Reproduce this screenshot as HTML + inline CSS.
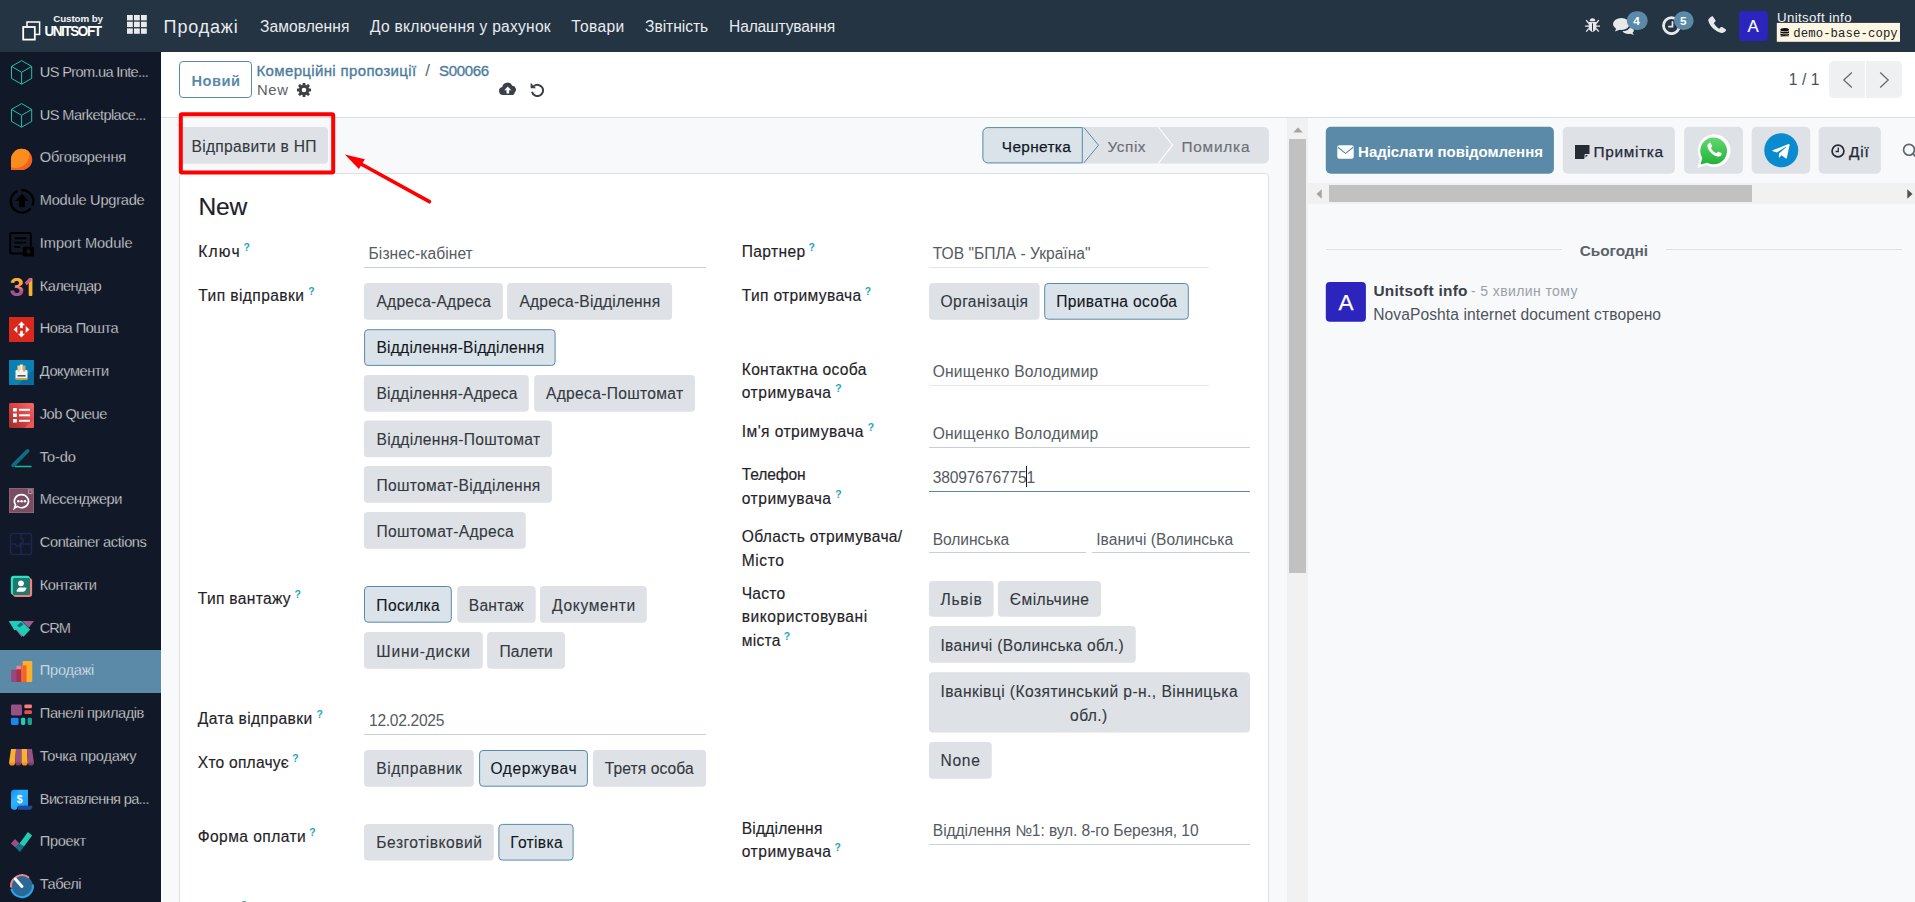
<!DOCTYPE html>
<html lang="uk"><head><meta charset="utf-8"><title>Odoo - S00066</title>
<style>html,body{margin:0;padding:0}html{width:1915px;height:902px;overflow:hidden}body{width:1915px;height:902px;overflow:hidden;position:relative;background:#f8f9fa;font-family:"Liberation Sans",sans-serif}div,span,svg{box-sizing:border-box}</style></head>
<body>
<div style="position:absolute;left:0px;top:0px;width:1915px;height:52px;background:#243442;"></div>
<svg style="position:absolute;left:21.5px;top:21px;" width="19" height="20" viewBox="0 0 19 20"><rect x="5" y="1" width="12.6" height="12.4" fill="none" stroke="#fff" stroke-width="1.5"/><rect x="1.2" y="6" width="11.6" height="12.6" fill="#243442" stroke="#fff" stroke-width="1.8"/></svg>
<span style="position:absolute;left:53.21px;top:14px;font-family:'Liberation Sans', sans-serif;font-size:9.8px;line-height:1;color:#f4f6f7;font-weight:700;white-space:pre;letter-spacing:-0.094px;">Custom by</span>
<span style="position:absolute;left:44.39px;top:25px;font-family:'Liberation Sans', sans-serif;font-size:13.5px;line-height:1;color:#fff;font-weight:700;white-space:pre;letter-spacing:-1.410px;transform:scaleY(1.05);transform-origin:0 100%;">UNITSOFT</span>
<svg style="position:absolute;left:127px;top:15px;" width="21" height="20" viewBox="0 0 21 20"><rect x="0" y="0.0" width="5.8" height="5.4" fill="#e8eaed"/><rect x="7" y="0.0" width="5.8" height="5.4" fill="#e8eaed"/><rect x="14" y="0.0" width="5.8" height="5.4" fill="#e8eaed"/><rect x="0" y="6.7" width="5.8" height="5.4" fill="#e8eaed"/><rect x="7" y="6.7" width="5.8" height="5.4" fill="#e8eaed"/><rect x="14" y="6.7" width="5.8" height="5.4" fill="#e8eaed"/><rect x="0" y="13.4" width="5.8" height="5.4" fill="#e8eaed"/><rect x="7" y="13.4" width="5.8" height="5.4" fill="#e8eaed"/><rect x="14" y="13.4" width="5.8" height="5.4" fill="#e8eaed"/></svg>
<span style="position:absolute;left:163.62px;top:18px;font-family:'Liberation Sans', sans-serif;font-size:18px;line-height:1;color:#e8ebee;font-weight:400;white-space:pre;letter-spacing:0.834px;">Продажі</span>
<span style="position:absolute;left:260.06px;top:19px;font-family:'Liberation Sans', sans-serif;font-size:15.6px;line-height:1;color:#e8ebee;font-weight:400;white-space:pre;letter-spacing:0.051px;">Замовлення</span>
<span style="position:absolute;left:370.06px;top:19px;font-family:'Liberation Sans', sans-serif;font-size:15.6px;line-height:1;color:#e8ebee;font-weight:400;white-space:pre;letter-spacing:0.246px;">До включення у рахунок</span>
<span style="position:absolute;left:571.36px;top:19px;font-family:'Liberation Sans', sans-serif;font-size:15.6px;line-height:1;color:#e8ebee;font-weight:400;white-space:pre;letter-spacing:0.353px;">Товари</span>
<span style="position:absolute;left:645.06px;top:19px;font-family:'Liberation Sans', sans-serif;font-size:15.6px;line-height:1;color:#e8ebee;font-weight:400;white-space:pre;letter-spacing:-0.031px;">Звітність</span>
<span style="position:absolute;left:729.06px;top:19px;font-family:'Liberation Sans', sans-serif;font-size:15.6px;line-height:1;color:#e8ebee;font-weight:400;white-space:pre;letter-spacing:-0.159px;">Налаштування</span>
<svg style="position:absolute;left:1585px;top:17px;" width="15" height="15.5" viewBox="0 0 15 15.5"><g fill="#e6e8ea"><path d="M4.700 4.300A2.800 3.100 0 0 1 10.300 4.300z"/><path d="M3.700 5.100H11.300V10.500C11.300 13 9.300 14.600 7.500 14.900 5.700 14.600 3.700 13 3.700 10.500z"/></g><g stroke="#e6e8ea" stroke-width="1.300" fill="none"><path d="M3.900 6.500L1.200 3.200M11.100 6.500L13.800 3.200M0 9.200H4M11 9.200H15M3.900 11.500L1.200 14.600M11.100 11.500L13.800 14.600"/></g><rect x="7" y="6.300" width="1" height="8" fill="#243442"/></svg>
<svg style="position:absolute;left:1613px;top:18px;" width="22" height="17" viewBox="0 0 22 17"><g fill="#e6e8ea"><ellipse cx="8.300" cy="6" rx="8.300" ry="6"/><path d="M3.500 9.500L2 13.600 8.500 11z"/><path d="M9.500 13.200c3.500 0 7-1.600 8-4.700 1.800.6 3.300 2 3.300 3.700 0 1-.5 1.900-1.300 2.600l1.300 2.100-3.600-1.100c-3 .6-6.200-.3-7.700-2.600z"/></g></svg>
<svg style="position:absolute;left:1625px;top:10px" width="24" height="22"><rect x="1.80" y="1.30" width="20.90" height="18.80" rx="9.4" fill="#5b8aa9"/></svg>
<span style="position:absolute;left:1633.19px;top:16px;font-family:'Liberation Sans', sans-serif;font-size:11.8px;line-height:1;color:#fff;font-weight:700;white-space:pre;">4</span>
<svg style="position:absolute;left:1661.8px;top:15.8px;" width="19.2" height="19.4" viewBox="0 0 19.2 19.4"><circle cx="9.500" cy="9.700" r="8" fill="none" stroke="#e6e8ea" stroke-width="2.800"/><path d="M10.500 5.300v5.300h-4.300" fill="none" stroke="#e6e8ea" stroke-width="1.700"/></svg>
<svg style="position:absolute;left:1673px;top:10px" width="22" height="22"><rect x="1.00" y="1.30" width="19.60" height="18.80" rx="9.4" fill="#5b8aa9"/></svg>
<span style="position:absolute;left:1679.89px;top:16px;font-family:'Liberation Sans', sans-serif;font-size:11.8px;line-height:1;color:#fff;font-weight:700;white-space:pre;">5</span>
<svg style="position:absolute;left:1707.8px;top:16px;" width="18.4" height="17.4" viewBox="0 0 18.4 17.4"><path d="M3.6 0.6c.5-.4 1.2-.3 1.5.2l2.3 3.4c.3.5.2 1.100-.2 1.500l-1.400 1.300c1.200 2.500 3.100 4.500 5.600 5.700l1.300-1.400c.4-.400 1-.500 1.500-.200l3.400 2.200c.5.300.6 1 .2 1.500-1.100 1.500-2.700 2.400-4.300 2.100C7.300 15.800 1.300 9.800.3 4.600 0 3 1.900 1.600 3.600.6z" fill="#e6e8ea"/></svg>
<svg style="position:absolute;left:1738px;top:10px" width="31" height="32"><rect x="1.00" y="1.10" width="28.90" height="29.80" rx="4" fill="#2c25bd"/></svg>
<span style="position:absolute;left:1747.49px;top:19px;font-family:'Liberation Sans', sans-serif;font-size:16.8px;line-height:1;color:#fff;font-weight:400;white-space:pre;-webkit-text-stroke:0.15px #fff;">A</span>
<span style="position:absolute;left:1777.00px;top:11px;font-family:'Liberation Sans', sans-serif;font-size:13.3px;line-height:1;color:#f1f3f5;font-weight:400;white-space:pre;letter-spacing:0.360px;">Unitsoft info</span>
<svg style="position:absolute;left:1775px;top:21px" width="126" height="22"><rect x="1.80" y="1.90" width="123.20" height="18.90" rx="0" fill="#fcf6e3"/></svg>
<svg style="position:absolute;left:1779.8px;top:27.9px;" width="9.5" height="9.5" viewBox="0 0 9.5 9.5"><g fill="#111"><ellipse cx="4.75" cy="1.8" rx="4.4" ry="1.7"/><path d="M.35 3.2c.8 1 8 1 8.800 0v1.600c-.8 1-8 1-8.800 0z"/><path d="M.35 5.600c.8 1 8 1 8.800 0v1.600c-.8 1-8 1-8.800 0z"/><path d="M.35 8c.8 1 8 1 8.800 0v0c0 2-8.800 2-8.800 0z"/></g></svg>
<span style="position:absolute;left:1793.26px;top:28px;font-family:'Liberation Mono', monospace;font-size:12.3px;line-height:1;color:#222;font-weight:400;white-space:pre;letter-spacing:0.090px;">demo-base-copy</span>
<div style="position:absolute;left:0px;top:52px;width:161px;height:850px;background:#111827;"></div>
<div style="position:absolute;left:0px;top:650px;width:161px;height:43px;background:#5b8aa9;"></div>
<svg style="position:absolute;left:10.5px;top:60.1px;" width="23" height="26" viewBox="0 0 23 26"><g fill="none" stroke="#20c9b3" stroke-width=".950" stroke-linejoin="round"><path d="M10.600 .600 L20.700 6.400 V18.400 L10.600 24.200 L.500 18.400 V6.400z"/><path d="M.500 6.400 L10.600 12.300 L20.700 6.400 M10.600 12.300 V24.200"/></g></svg>
<span style="position:absolute;left:39.82px;top:65px;font-family:'Liberation Sans', sans-serif;font-size:14.6px;line-height:1;color:#eceef2;font-weight:400;white-space:pre;letter-spacing:-0.644px;-webkit-text-stroke:0.35px #111827;">US Prom.ua Inte...</span>
<svg style="position:absolute;left:10.5px;top:102.89999999999999px;" width="23" height="26" viewBox="0 0 23 26"><g fill="none" stroke="#20c9b3" stroke-width=".950" stroke-linejoin="round"><path d="M10.600 .600 L20.700 6.400 V18.400 L10.600 24.200 L.500 18.400 V6.400z"/><path d="M.500 6.400 L10.600 12.300 L20.700 6.400 M10.600 12.300 V24.200"/></g></svg>
<span style="position:absolute;left:39.82px;top:108px;font-family:'Liberation Sans', sans-serif;font-size:14.6px;line-height:1;color:#eceef2;font-weight:400;white-space:pre;letter-spacing:-0.590px;-webkit-text-stroke:0.35px #111827;">US Marketplace...</span>
<svg style="position:absolute;left:10px;top:146.6px;" width="24" height="24" viewBox="0 0 24 24"><defs><clipPath id="dc"><path d="M11.600 1.800a10.600 10.600 0 0 1 0 21.300H1V12.400A10.600 10.600 0 0 1 11.600 1.800z"/></clipPath></defs><path d="M11.600 1.800a10.600 10.600 0 0 1 0 21.300H1V12.400A10.600 10.600 0 0 1 11.600 1.800z" fill="#f4631e"/><circle cx="5.500" cy="7" r="14" fill="#fb8c1e" clip-path="url(#dc)"/></svg>
<span style="position:absolute;left:39.82px;top:150px;font-family:'Liberation Sans', sans-serif;font-size:14.6px;line-height:1;color:#eceef2;font-weight:400;white-space:pre;letter-spacing:-0.250px;-webkit-text-stroke:0.35px #111827;">Обговорення</span>
<svg style="position:absolute;left:8.5px;top:188.39999999999998px;" width="26" height="26" viewBox="0 0 26 26"><circle cx="13" cy="13.300" r="11.300" fill="none" stroke="#000" stroke-width="2.300" stroke-dasharray="40.400 4 22.600 4" transform="rotate(40 13 13.300)"/><path d="M13 5.800l6.900 7.200h-3.900v6.200h-6v-6.200H6.100z" fill="#000"/></svg>
<span style="position:absolute;left:39.82px;top:193px;font-family:'Liberation Sans', sans-serif;font-size:14.6px;line-height:1;color:#eceef2;font-weight:400;white-space:pre;letter-spacing:-0.232px;-webkit-text-stroke:0.35px #111827;">Module Upgrade</span>
<svg style="position:absolute;left:9px;top:231.2px;" width="27" height="27" viewBox="0 0 27 27"><g fill="none" stroke="#000" stroke-width="1.900"><path d="M14 22.500H2.700a1.500 1.500 0 0 1-1.500-1.500V3.500A1.500 1.500 0 0 1 2.700 2H20.300a1.500 1.500 0 0 1 1.500 1.500V15.500"/><path d="M5.500 7.200h12M5.500 11.600h11.500M5.500 16h5.500"/></g><rect x="13.800" y="15.800" width="11.300" height="9.800" rx="1.500" fill="#000"/><path d="M19.400 23.300l-3-3.200h1.900v-2.300h2.200v2.300h1.900z" fill="#111827"/></svg>
<span style="position:absolute;left:39.82px;top:236px;font-family:'Liberation Sans', sans-serif;font-size:14.6px;line-height:1;color:#eceef2;font-weight:400;white-space:pre;letter-spacing:-0.048px;-webkit-text-stroke:0.35px #111827;">Import Module</span>
<svg style="position:absolute;left:10px;top:275.0px;" width="24" height="24" viewBox="0 0 24 24"><defs><linearGradient id="cg" x1="0" y1="0" x2="0" y2="1"><stop offset="0" stop-color="#fbb130"/><stop offset=".38" stop-color="#fbb130"/><stop offset=".52" stop-color="#f4788a"/><stop offset=".66" stop-color="#a4568c"/><stop offset="1" stop-color="#a4568c"/></linearGradient></defs><text x="-.300" y="21.100" font-family="Liberation Sans" font-weight="700" font-size="25.400" fill="url(#cg)" textLength="14.200" lengthAdjust="spacingAndGlyphs">3</text><rect x="18.700" y="3" width="3.700" height="18.100" rx=".800" fill="#fbb130"/><path d="M14.800 7.600L19.300 3h2.200v2.400L16.800 10.300z" fill="#c95f8e"/></svg>
<span style="position:absolute;left:39.82px;top:279px;font-family:'Liberation Sans', sans-serif;font-size:14.6px;line-height:1;color:#eceef2;font-weight:400;white-space:pre;letter-spacing:-0.614px;-webkit-text-stroke:0.35px #111827;">Календар</span>
<svg style="position:absolute;left:9px;top:317px;" width="25" height="25" viewBox="0 0 25 25"><rect width="25" height="25" fill="#da291c"/><g fill="#fff" transform="translate(1.500 1.500) scale(.88)"><path d="M12.500 3.500l4 4.200h-8z"/><path d="M12.500 21.500l4-4.200h-8z"/><path d="M3.500 12.500l4.200-4v8z"/><path d="M21.500 12.500l-4.200-4v8z"/><rect x="11" y="7" width="3" height="4"/><rect x="11" y="14" width="3" height="4"/></g></svg>
<span style="position:absolute;left:39.82px;top:321px;font-family:'Liberation Sans', sans-serif;font-size:14.6px;line-height:1;color:#eceef2;font-weight:400;white-space:pre;letter-spacing:-0.502px;-webkit-text-stroke:0.35px #111827;">Нова Пошта</span>
<svg style="position:absolute;left:9px;top:360px;" width="25" height="25" viewBox="0 0 25 25"><rect width="25" height="25" fill="#0d80b3"/><path d="M9 25L25 9v16z" fill="#0a6c9c"/><g><rect x="6.500" y="10" width="12" height="9" rx="1" fill="#eef2f5"/><rect x="8.500" y="5.500" width="2.500" height="6" fill="#f6d87a"/><rect x="11.200" y="4.500" width="2.500" height="7" fill="#fff"/><rect x="13.900" y="5.500" width="2.500" height="6" fill="#f29c50"/><rect x="8.500" y="15" width="8" height="1.600" fill="#555"/><rect x="6.500" y="18" width="12" height="2" fill="#c9a24a"/></g></svg>
<span style="position:absolute;left:39.82px;top:364px;font-family:'Liberation Sans', sans-serif;font-size:14.6px;line-height:1;color:#eceef2;font-weight:400;white-space:pre;letter-spacing:-0.438px;-webkit-text-stroke:0.35px #111827;">Документи</span>
<svg style="position:absolute;left:9px;top:403px;" width="25" height="25" viewBox="0 0 25 25"><defs><linearGradient id="jq" x1="1" y1="0" x2="0" y2="1"><stop offset="0" stop-color="#f76a68"/><stop offset=".45" stop-color="#d94545"/><stop offset="1" stop-color="#a02c2c"/></linearGradient></defs><rect width="25" height="25" rx="1.500" fill="url(#jq)"/><path d="M25 15.500V23.500a1.500 1.500 0 0 1-1.500 1.500H15.500z" fill="#ec5554"/><g fill="#fff"><rect x="4" y="5" width="3.800" height="3.500"/><rect x="10" y="5.800" width="11" height="2"/><rect x="4" y="10.500" width="3.800" height="3.500"/><rect x="10" y="11.300" width="11" height="2"/><rect x="4" y="16" width="3.800" height="3.500"/><rect x="10" y="16.800" width="11" height="2"/></g></svg>
<span style="position:absolute;left:39.82px;top:407px;font-family:'Liberation Sans', sans-serif;font-size:14.6px;line-height:1;color:#eceef2;font-weight:400;white-space:pre;letter-spacing:-0.495px;-webkit-text-stroke:0.35px #111827;">Job Queue</span>
<svg style="position:absolute;left:10px;top:446.2px;" width="24" height="24" viewBox="0 0 24 24"><path d="M3.200 19.300L17.600 4.900" stroke="#0f6c82" stroke-width="3.800" stroke-linecap="round" fill="none"/><path d="M5 20.500H21.500" stroke="#17b39d" stroke-width="1.600" fill="none"/></svg>
<span style="position:absolute;left:39.82px;top:450px;font-family:'Liberation Sans', sans-serif;font-size:14.6px;line-height:1;color:#eceef2;font-weight:400;white-space:pre;letter-spacing:-0.093px;-webkit-text-stroke:0.35px #111827;">To-do</span>
<svg style="position:absolute;left:9px;top:488px;" width="25" height="25" viewBox="0 0 25 25"><rect width="25" height="25" fill="#7b4d62"/><rect x=".400" y=".400" width="24.200" height="24.200" fill="none" stroke="#94697c" stroke-width=".800"/><g transform="translate(0 1.200)"><path d="M12.500 5.500a7 6.500 0 1 1-4.200 11.700L5.500 19l1-3.500A7 6.500 0 0 1 12.500 5.500z" fill="none" stroke="#fff" stroke-width="1.700"/><g fill="#fff"><circle cx="9.300" cy="12" r="1.300"/><circle cx="12.600" cy="12" r="1.300"/><circle cx="15.900" cy="12" r="1.300"/></g></g><rect x="19.500" y="2" width="3.500" height="3.500" fill="none" stroke="#c8a9b6" stroke-width=".800"/></svg>
<span style="position:absolute;left:39.82px;top:492px;font-family:'Liberation Sans', sans-serif;font-size:14.6px;line-height:1;color:#eceef2;font-weight:400;white-space:pre;letter-spacing:-0.443px;-webkit-text-stroke:0.35px #111827;">Месенджери</span>
<svg style="position:absolute;left:9.4px;top:531.5999999999999px;" width="24" height="24" viewBox="0 0 24 24"><g fill="none" stroke="#1d2650" stroke-width="1.500"><rect x="1.500" y="1.500" width="21" height="21" rx="2.500"/><path d="M12 1.500v5a2 2 0 1 1 0 4.500v11.500M1.500 12h5a2 2 0 1 0 4.500 0h11.500"/></g></svg>
<span style="position:absolute;left:39.82px;top:535px;font-family:'Liberation Sans', sans-serif;font-size:14.6px;line-height:1;color:#eceef2;font-weight:400;white-space:pre;letter-spacing:-0.407px;-webkit-text-stroke:0.35px #111827;">Container actions</span>
<svg style="position:absolute;left:10px;top:574.5999999999999px;" width="24" height="24" viewBox="0 0 24 24"><rect x="2.900" y="2.900" width="19.200" height="19.200" rx="3" fill="#f87e7c"/><rect x=".800" y=".800" width="19.200" height="19.200" rx="3" fill="#2fe0c8"/><rect x="3" y="3" width="17" height="17" rx="1.500" fill="#1e7a6f"/><circle cx="11" cy="8.300" r="2.900" fill="#fff"/><path d="M7.800 13.800c.5-.900 1.300-1.300 2.300-1.300h5.300c1 0 1.300.800.800 1.600l-.900 1.500c-.500.800-1.300 1.200-2.300 1.200H7.600c-1 0-1.300-.700-.800-1.500z" fill="#fff"/></svg>
<span style="position:absolute;left:39.82px;top:578px;font-family:'Liberation Sans', sans-serif;font-size:14.6px;line-height:1;color:#eceef2;font-weight:400;white-space:pre;letter-spacing:-0.506px;-webkit-text-stroke:0.35px #111827;">Контакти</span>
<svg style="position:absolute;left:8px;top:620.0px;" width="28" height="22" viewBox="0 0 28 22"><path d="M1 1h25L13.500 17z" fill="#9b5a8e"/><path d="M.800 1H13.500L22.300 9.500 15.500 16.800 8.300 9.800 6.300 10.200z" fill="#1fcdb5"/><path d="M13.300 1h1l8.300 8.200-.500.500z" fill="#111827" opacity=".55"/><path d="M9 5.500L13 2.200 15.500 4.300 11.500 7.500z" fill="#0f6c82"/></svg>
<span style="position:absolute;left:39.82px;top:621px;font-family:'Liberation Sans', sans-serif;font-size:14.6px;line-height:1;color:#eceef2;font-weight:400;white-space:pre;letter-spacing:-1.033px;-webkit-text-stroke:0.35px #111827;">CRM</span>
<svg style="position:absolute;left:10px;top:660.1999999999999px;" width="24" height="24" viewBox="0 0 24 24"><g transform="translate(.200 .100) scale(.960)"><rect x="1" y="10" width="9" height="12.800" rx="1" fill="#98487f"/><rect x="6.500" y="6" width="5" height="5" rx="1" fill="#f87e8a"/><rect x="6.500" y="9.500" width="5" height="13.300" rx=".500" fill="#a5304f"/><rect x="11.500" y="5.500" width="6" height="17.300" rx="1" fill="#f4622a"/><rect x="13" y="1" width="10" height="21.800" rx="1.200" fill="#fbb130"/><rect x="13" y="5.500" width="4" height="17.300" fill="#f4622a"/></g></svg>
<span style="position:absolute;left:39.82px;top:663px;font-family:'Liberation Sans', sans-serif;font-size:14.6px;line-height:1;color:#f0f4f8;font-weight:400;white-space:pre;letter-spacing:-0.271px;-webkit-text-stroke:0.35px #5b8aa9;">Продажі</span>
<svg style="position:absolute;left:10px;top:703.2px;" width="24" height="24" viewBox="0 0 24 24"><g transform="scale(.955)"><rect x="1" y="1.500" width="11.500" height="11.500" rx="1.500" fill="#985184"/><rect x="15" y="1.500" width="8" height="4" rx="1.300" fill="#f87e7c"/><rect x="15" y="7.500" width="8" height="4" rx="1.300" fill="#ee4b4b"/><rect x="1" y="15.500" width="8" height="7.500" rx="1.500" fill="#1b86f0"/><rect x="11.500" y="15.500" width="4.500" height="7.500" rx="1.500" fill="#22cbb4"/><rect x="18.500" y="15.500" width="4.500" height="7.500" rx="1.500" fill="#13a593"/></g></svg>
<span style="position:absolute;left:39.82px;top:706px;font-family:'Liberation Sans', sans-serif;font-size:14.6px;line-height:1;color:#eceef2;font-weight:400;white-space:pre;letter-spacing:-0.419px;-webkit-text-stroke:0.35px #111827;">Панелі приладів</span>
<svg style="position:absolute;left:8px;top:748.0px;" width="28" height="20" viewBox="0 0 28 20"><g><path d="M3 1h5L7.200 15H1z" fill="#fbb130"/><path d="M8 1h5.500V15H7.200z" fill="#985184"/><path d="M13.500 1H19l.800 14H13.500z" fill="#fbb130"/><path d="M19 1h5l2 14h-6.200z" fill="#985184"/><path d="M1 14.500h6.200a3.100 3.100 0 0 1-6.200 0z" fill="#fb8c1e"/><path d="M7.200 14.500h6.300a3.150 3.100 0 0 1-6.300 0z" fill="#7d3f6b"/><path d="M13.500 14.500h6.300a3.150 3.100 0 0 1-6.300 0z" fill="#fb8c1e"/><path d="M19.800 14.500H26a3.100 3.100 0 0 1-6.200 0z" fill="#7d3f6b"/></g></svg>
<span style="position:absolute;left:39.82px;top:749px;font-family:'Liberation Sans', sans-serif;font-size:14.6px;line-height:1;color:#eceef2;font-weight:400;white-space:pre;letter-spacing:-0.251px;-webkit-text-stroke:0.35px #111827;">Точка продажу</span>
<svg style="position:absolute;left:10px;top:787.5999999999999px;" width="25" height="24" viewBox="0 0 25 24"><defs><linearGradient id="ig" x1="0" y1="0" x2="1" y2="1"><stop offset="0" stop-color="#1b86f0"/><stop offset=".35" stop-color="#2bb2ff"/><stop offset="1" stop-color="#1e96f5"/></linearGradient></defs><path d="M8 17.800H22.200a3 3 0 0 1-3 4H8z" fill="#1a4d9e"/><path d="M1 4.800a3 3 0 0 1 3-3H18V17.800H9.500a2.300 2.300 0 0 0-2.300 2.300 2 2 0 0 1-2 1.700H4a3 3 0 0 1-3-3z" fill="url(#ig)"/><text x="9.700" y="15.300" font-family="Liberation Sans" font-weight="700" font-size="10.500" fill="#fff" text-anchor="middle">$</text></svg>
<span style="position:absolute;left:39.82px;top:792px;font-family:'Liberation Sans', sans-serif;font-size:14.6px;line-height:1;color:#eceef2;font-weight:400;white-space:pre;letter-spacing:-0.670px;-webkit-text-stroke:0.35px #111827;">Виставлення ра...</span>
<svg style="position:absolute;left:10px;top:831.4px;" width="24" height="24" viewBox="0 0 24 24"><path d="M.800 12.500L5 8 9.500 12.500 5.500 16.500z" fill="#985184"/><path d="M5.500 16.500L9.500 12.500 14 15.500 10 21z" fill="#166f82"/><path d="M9.500 12.500L17.900 1.100 22.100 4.600 14 15.500z" fill="#22cbb4"/></svg>
<span style="position:absolute;left:39.82px;top:834px;font-family:'Liberation Sans', sans-serif;font-size:14.6px;line-height:1;color:#eceef2;font-weight:400;white-space:pre;letter-spacing:-0.321px;-webkit-text-stroke:0.35px #111827;">Проект</span>
<svg style="position:absolute;left:8.5px;top:872.4999999999999px;" width="26" height="26" viewBox="0 0 26 26"><circle cx="13" cy="13.500" r="11" fill="#2a6996"/><path d="M2.300 16a11 11 0 0 0 21.500-4.500" fill="none" stroke="#26a8f0" stroke-width="2"/><path d="M2.100 14.500A11 11 0 0 1 20 4.700" fill="none" stroke="#f4828a" stroke-width="2"/><path d="M13 13.500L6.300 6" stroke="#fff" stroke-width="3" stroke-linecap="round"/></svg>
<span style="position:absolute;left:39.82px;top:877px;font-family:'Liberation Sans', sans-serif;font-size:14.6px;line-height:1;color:#eceef2;font-weight:400;white-space:pre;letter-spacing:-0.453px;-webkit-text-stroke:0.35px #111827;">Табелі</span>
<div style="position:absolute;left:161px;top:52px;width:1754px;height:65px;background:#fff;"></div>
<div style="position:absolute;left:161px;top:117px;width:1754px;height:1px;background:#d9dee4;"></div>
<div style="position:absolute;left:179px;top:61px;width:73px;height:37px;background:#fff;border:1px solid #5b8aa9;border-radius:4px;"></div>
<span style="position:absolute;left:191.42px;top:74px;font-family:'Liberation Sans', sans-serif;font-size:14.7px;line-height:1;color:#5b8aa9;font-weight:700;white-space:pre;letter-spacing:0.478px;">Новий</span>
<span style="position:absolute;left:256.50px;top:63px;font-family:'Liberation Sans', sans-serif;font-size:15px;line-height:1;color:#4c7d9c;font-weight:400;white-space:pre;letter-spacing:0.351px;-webkit-text-stroke:0.35px #4c7d9c;">Комерційні пропозиції</span>
<span style="position:absolute;left:425.28px;top:62px;font-family:'Liberation Sans', sans-serif;font-size:17px;line-height:1;color:#5f6873;font-weight:400;white-space:pre;">/</span>
<span style="position:absolute;left:439.00px;top:63px;font-family:'Liberation Sans', sans-serif;font-size:15px;line-height:1;color:#4c7d9c;font-weight:400;white-space:pre;letter-spacing:-0.336px;-webkit-text-stroke:0.35px #4c7d9c;">S00066</span>
<span style="position:absolute;left:257.01px;top:83px;font-family:'Liberation Sans', sans-serif;font-size:14.8px;line-height:1;color:#5b6068;font-weight:400;white-space:pre;letter-spacing:0.689px;">New</span>
<svg style="position:absolute;left:297px;top:82.6px;" width="14" height="14" viewBox="0 0 14 14"><g fill="#3b4047"><rect x="5.600" y="-.200" width="2.800" height="14.400" rx=".600" transform="rotate(0 7 7)"/><rect x="5.600" y="-.200" width="2.800" height="14.400" rx=".600" transform="rotate(45 7 7)"/><rect x="5.600" y="-.200" width="2.800" height="14.400" rx=".600" transform="rotate(90 7 7)"/><rect x="5.600" y="-.200" width="2.800" height="14.400" rx=".600" transform="rotate(135 7 7)"/><circle cx="7" cy="7" r="5.200"/></g><circle cx="7" cy="7" r="2.300" fill="#fff"/></svg>
<svg style="position:absolute;left:498.6px;top:82.4px;" width="18" height="13.2" viewBox="0 0 18 13.2"><path d="M4 13a4 4 0 0 1-.800-7.900A5.300 5.300 0 0 1 13.300 3.800a3.700 3.700 0 0 1 2.400 6.500 2.700 2.700 0 0 1-1.700 2.700z" fill="#3b4047"/><path d="M8.800 4.600l3.500 3.700h-2.200v3.100H7.500v-3.100H5.300z" fill="#fff"/></svg>
<svg style="position:absolute;left:529.5px;top:81.5px;" width="14.5" height="15" viewBox="0 0 14.5 15"><path d="M3.800 4.200A5.600 5.600 0 1 1 2 9.800" fill="none" stroke="#3b4047" stroke-width="2"/><path d="M.600 .800v5.400h5.400z" fill="#3b4047"/></svg>
<span style="position:absolute;left:1788.66px;top:72px;font-family:'Liberation Sans', sans-serif;font-size:15.6px;line-height:1;color:#4b5158;font-weight:400;white-space:pre;letter-spacing:0.126px;">1 / 1</span>
<div style="position:absolute;left:1829px;top:61px;width:36px;height:37px;background:#eef0f2;border-radius:5px 0 0 5px;"></div>
<div style="position:absolute;left:1866px;top:61px;width:36px;height:37px;background:#eef0f2;border-radius:0 5px 5px 0;"></div>
<svg style="position:absolute;left:1842px;top:70.5px;" width="12" height="18" viewBox="0 0 12 18"><path d="M9.800 1.600L1.800 9l8 7.400" fill="none" stroke="#666b72" stroke-width="1.300"/></svg>
<svg style="position:absolute;left:1878px;top:70.5px;" width="12" height="18" viewBox="0 0 12 18"><path d="M2.200 1.600L10.200 9l-8 7.400" fill="none" stroke="#666b72" stroke-width="1.300"/></svg>
<div style="position:absolute;left:161px;top:118px;width:1126px;height:784px;background:#f8f9fa;"></div>
<div style="position:absolute;left:161px;top:118px;width:1.3px;height:784px;background:#fff;"></div>
<div style="position:absolute;left:179.2px;top:172.8px;width:1089.8px;height:740px;background:#fff;border:1px solid #dde1e6;border-radius:4px;"></div>
<svg style="position:absolute;left:178px;top:126px" width="151" height="39"><rect x="1.80" y="1.00" width="148.20" height="36.80" rx="4" fill="#dee1e6"/></svg>
<svg style="position:absolute;left:178px;top:111px;" width="160" height="66" viewBox="0 0 160 66"><rect x="2.800" y="3.300" width="152.400" height="58.100" rx="1.200" fill="none" stroke="#ff0000" stroke-width="4"/></svg>
<span style="position:absolute;left:191.46px;top:139px;font-family:'Liberation Sans', sans-serif;font-size:15.6px;line-height:1;color:#33393f;font-weight:400;white-space:pre;letter-spacing:0.283px;-webkit-text-stroke:0.12px #33393f;">Відправити в НП</span>
<svg style="position:absolute;left:340px;top:150px;" width="100" height="60" viewBox="0 0 100 60"><path d="M89.400 51.700L22 14.500" stroke="#ff0000" stroke-width="3.700" stroke-linecap="round" fill="none"/><path d="M4.800 4.600L24.900 9.300 18.900 19.100z" fill="#ff0000"/></svg>
<svg style="position:absolute;left:981px;top:126px" width="289" height="39"><rect x="1.40" y="1.10" width="286.50" height="36.30" rx="5" fill="#dee1e6"/></svg>
<svg style="position:absolute;left:1156px;top:127.2px;" width="20" height="36.4" viewBox="0 0 20 36.4"><path d="M2.300 0L16.500 18.200 2.300 36.400" fill="none" stroke="#fff" stroke-width="1.100"/></svg>
<svg style="position:absolute;left:1083.3px;top:127.2px;" width="20" height="36.4" viewBox="0 0 20 36.4"><path d="M.900 .500L15.500 18.200 .900 35.900z" fill="#dae3ea"/><path d="M.900 .500L15.500 18.200 .900 35.900" fill="none" stroke="#5b8aa9" stroke-width="1"/></svg>
<svg style="position:absolute;left:981px;top:126px;" width="104" height="39" viewBox="0 0 104 39"><path d="M6.900 1.600H101.300V36.900H6.900a5 5 0 0 1-5-5V6.600a5 5 0 0 1 5-5z" fill="#dae3ea" stroke="#5b8aa9" stroke-width="1"/></svg>
<span style="position:absolute;left:1001.78px;top:139px;font-family:'Liberation Sans', sans-serif;font-size:15.4px;line-height:1;color:#111827;font-weight:400;white-space:pre;letter-spacing:0.355px;-webkit-text-stroke:0.25px #111827;">Чернетка</span>
<span style="position:absolute;left:1107.58px;top:139px;font-family:'Liberation Sans', sans-serif;font-size:15.4px;line-height:1;color:#6b6f76;font-weight:400;white-space:pre;letter-spacing:0.508px;-webkit-text-stroke:0.15px #6b6f76;">Успіх</span>
<span style="position:absolute;left:1181.48px;top:139px;font-family:'Liberation Sans', sans-serif;font-size:15.4px;line-height:1;color:#6b6f76;font-weight:400;white-space:pre;letter-spacing:0.761px;-webkit-text-stroke:0.15px #6b6f76;">Помилка</span>
<span style="position:absolute;left:198.42px;top:195px;font-family:'Liberation Sans', sans-serif;font-size:24.6px;line-height:1;color:#1c222b;font-weight:400;white-space:pre;letter-spacing:-0.150px;-webkit-text-stroke:0.15px #1c222b;">New</span>
<span style="position:absolute;left:198.26px;top:244px;font-family:'Liberation Sans', sans-serif;font-size:15.6px;line-height:1;color:#1f2329;font-weight:400;white-space:pre;letter-spacing:1.200px;-webkit-text-stroke:0.15px #1f2329;">Ключ</span>
<span style="position:absolute;left:243.58px;top:243px;font-family:'Liberation Sans', sans-serif;font-size:10.4px;line-height:1;color:#1fa3c0;font-weight:700;white-space:pre;">?</span>
<span style="position:absolute;left:368.56px;top:246px;font-family:'Liberation Sans', sans-serif;font-size:15.6px;line-height:1;color:#555b62;font-weight:400;white-space:pre;letter-spacing:0.072px;">Бізнес-кабінет</span>
<div style="position:absolute;left:363.9px;top:267px;width:342.1px;height:1px;background:#c8ced6;"></div>
<span style="position:absolute;left:198.26px;top:288px;font-family:'Liberation Sans', sans-serif;font-size:15.6px;line-height:1;color:#1f2329;font-weight:400;white-space:pre;letter-spacing:0.415px;-webkit-text-stroke:0.15px #1f2329;">Тип відправки</span>
<span style="position:absolute;left:308.28px;top:287px;font-family:'Liberation Sans', sans-serif;font-size:10.4px;line-height:1;color:#1fa3c0;font-weight:700;white-space:pre;">?</span>
<svg style="position:absolute;left:362px;top:282px" width="142" height="39"><rect x="1.90" y="1.00" width="139.00" height="36.70" rx="4" fill="#dee1e6"/></svg>
<span style="position:absolute;left:376.46px;top:294px;font-family:'Liberation Sans', sans-serif;font-size:15.6px;line-height:1;color:#33393f;font-weight:400;white-space:pre;letter-spacing:0.219px;-webkit-text-stroke:0.12px #33393f;">Адреса-Адреса</span>
<svg style="position:absolute;left:506px;top:282px" width="168" height="39"><rect x="1.10" y="1.00" width="165.00" height="36.70" rx="4" fill="#dee1e6"/></svg>
<span style="position:absolute;left:519.46px;top:294px;font-family:'Liberation Sans', sans-serif;font-size:15.6px;line-height:1;color:#33393f;font-weight:400;white-space:pre;letter-spacing:0.199px;-webkit-text-stroke:0.12px #33393f;">Адреса-Відділення</span>
<svg style="position:absolute;left:363px;top:328px" width="194" height="39"><rect x="1.60" y="1.70" width="190.50" height="35.70" rx="3.50" fill="#dae3ea" stroke="#5b8aa9" stroke-width="1"/></svg>
<span style="position:absolute;left:376.46px;top:340px;font-family:'Liberation Sans', sans-serif;font-size:15.6px;line-height:1;color:#14181e;font-weight:400;white-space:pre;letter-spacing:0.225px;-webkit-text-stroke:0.12px #14181e;">Відділення-Відділення</span>
<svg style="position:absolute;left:362px;top:374px" width="168" height="39"><rect x="1.90" y="1.10" width="164.90" height="36.70" rx="4" fill="#dee1e6"/></svg>
<span style="position:absolute;left:376.46px;top:386px;font-family:'Liberation Sans', sans-serif;font-size:15.6px;line-height:1;color:#33393f;font-weight:400;white-space:pre;letter-spacing:0.223px;-webkit-text-stroke:0.12px #33393f;">Відділення-Адреса</span>
<svg style="position:absolute;left:533px;top:374px" width="163" height="39"><rect x="1.10" y="1.10" width="160.90" height="36.70" rx="4" fill="#dee1e6"/></svg>
<span style="position:absolute;left:545.96px;top:386px;font-family:'Liberation Sans', sans-serif;font-size:15.6px;line-height:1;color:#33393f;font-weight:400;white-space:pre;letter-spacing:0.316px;-webkit-text-stroke:0.12px #33393f;">Адреса-Поштомат</span>
<svg style="position:absolute;left:362px;top:419px" width="191" height="40"><rect x="1.90" y="1.50" width="188.00" height="36.70" rx="4" fill="#dee1e6"/></svg>
<span style="position:absolute;left:376.46px;top:432px;font-family:'Liberation Sans', sans-serif;font-size:15.6px;line-height:1;color:#33393f;font-weight:400;white-space:pre;letter-spacing:0.288px;-webkit-text-stroke:0.12px #33393f;">Відділення-Поштомат</span>
<svg style="position:absolute;left:362px;top:465px" width="191" height="39"><rect x="1.90" y="1.10" width="188.00" height="36.70" rx="4" fill="#dee1e6"/></svg>
<span style="position:absolute;left:376.46px;top:478px;font-family:'Liberation Sans', sans-serif;font-size:15.6px;line-height:1;color:#33393f;font-weight:400;white-space:pre;letter-spacing:0.304px;-webkit-text-stroke:0.12px #33393f;">Поштомат-Відділення</span>
<svg style="position:absolute;left:362px;top:511px" width="165" height="39"><rect x="1.90" y="1.00" width="161.90" height="36.70" rx="4" fill="#dee1e6"/></svg>
<span style="position:absolute;left:376.46px;top:524px;font-family:'Liberation Sans', sans-serif;font-size:15.6px;line-height:1;color:#33393f;font-weight:400;white-space:pre;letter-spacing:0.323px;-webkit-text-stroke:0.12px #33393f;">Поштомат-Адреса</span>
<span style="position:absolute;left:197.76px;top:591px;font-family:'Liberation Sans', sans-serif;font-size:15.6px;line-height:1;color:#1f2329;font-weight:400;white-space:pre;letter-spacing:0.310px;-webkit-text-stroke:0.15px #1f2329;">Тип вантажу</span>
<span style="position:absolute;left:294.48px;top:590px;font-family:'Liberation Sans', sans-serif;font-size:10.4px;line-height:1;color:#1fa3c0;font-weight:700;white-space:pre;">?</span>
<svg style="position:absolute;left:363px;top:585px" width="90" height="39"><rect x="1.50" y="1.50" width="86.80" height="35.70" rx="3.50" fill="#dae3ea" stroke="#5b8aa9" stroke-width="1"/></svg>
<span style="position:absolute;left:376.36px;top:598px;font-family:'Liberation Sans', sans-serif;font-size:15.6px;line-height:1;color:#14181e;font-weight:400;white-space:pre;letter-spacing:0.349px;-webkit-text-stroke:0.12px #14181e;">Посилка</span>
<svg style="position:absolute;left:456px;top:585px" width="81" height="39"><rect x="1.20" y="1.00" width="78.50" height="36.70" rx="4" fill="#dee1e6"/></svg>
<span style="position:absolute;left:468.86px;top:598px;font-family:'Liberation Sans', sans-serif;font-size:15.6px;line-height:1;color:#33393f;font-weight:400;white-space:pre;letter-spacing:0.218px;-webkit-text-stroke:0.12px #33393f;">Вантаж</span>
<svg style="position:absolute;left:539px;top:585px" width="109" height="39"><rect x="1.00" y="1.00" width="106.80" height="36.70" rx="4" fill="#dee1e6"/></svg>
<span style="position:absolute;left:552.06px;top:598px;font-family:'Liberation Sans', sans-serif;font-size:15.6px;line-height:1;color:#33393f;font-weight:400;white-space:pre;letter-spacing:0.653px;-webkit-text-stroke:0.12px #33393f;">Документи</span>
<svg style="position:absolute;left:363px;top:631px" width="121" height="39"><rect x="1.00" y="1.00" width="118.80" height="36.70" rx="4" fill="#dee1e6"/></svg>
<span style="position:absolute;left:376.36px;top:644px;font-family:'Liberation Sans', sans-serif;font-size:15.6px;line-height:1;color:#33393f;font-weight:400;white-space:pre;letter-spacing:0.770px;-webkit-text-stroke:0.12px #33393f;">Шини-диски</span>
<svg style="position:absolute;left:486px;top:631px" width="80" height="39"><rect x="1.10" y="1.00" width="77.90" height="36.70" rx="4" fill="#dee1e6"/></svg>
<span style="position:absolute;left:499.46px;top:644px;font-family:'Liberation Sans', sans-serif;font-size:15.6px;line-height:1;color:#33393f;font-weight:400;white-space:pre;letter-spacing:0.079px;-webkit-text-stroke:0.12px #33393f;">Палети</span>
<span style="position:absolute;left:197.76px;top:711px;font-family:'Liberation Sans', sans-serif;font-size:15.6px;line-height:1;color:#1f2329;font-weight:400;white-space:pre;letter-spacing:0.389px;-webkit-text-stroke:0.15px #1f2329;">Дата відправки</span>
<span style="position:absolute;left:316.48px;top:710px;font-family:'Liberation Sans', sans-serif;font-size:10.4px;line-height:1;color:#1fa3c0;font-weight:700;white-space:pre;">?</span>
<span style="position:absolute;left:369.06px;top:713px;font-family:'Liberation Sans', sans-serif;font-size:15.6px;line-height:1;color:#555b62;font-weight:400;white-space:pre;letter-spacing:-0.297px;">12.02.2025</span>
<div style="position:absolute;left:363.9px;top:734px;width:342.1px;height:1px;background:#c8ced6;"></div>
<span style="position:absolute;left:197.76px;top:755px;font-family:'Liberation Sans', sans-serif;font-size:15.6px;line-height:1;color:#1f2329;font-weight:400;white-space:pre;letter-spacing:0.225px;-webkit-text-stroke:0.15px #1f2329;">Хто оплачує</span>
<span style="position:absolute;left:292.18px;top:754px;font-family:'Liberation Sans', sans-serif;font-size:10.4px;line-height:1;color:#1fa3c0;font-weight:700;white-space:pre;">?</span>
<svg style="position:absolute;left:363px;top:749px" width="112" height="39"><rect x="1.00" y="1.00" width="109.80" height="36.70" rx="4" fill="#dee1e6"/></svg>
<span style="position:absolute;left:376.36px;top:761px;font-family:'Liberation Sans', sans-serif;font-size:15.6px;line-height:1;color:#33393f;font-weight:400;white-space:pre;letter-spacing:0.488px;-webkit-text-stroke:0.12px #33393f;">Відправник</span>
<svg style="position:absolute;left:478px;top:749px" width="111" height="39"><rect x="1.60" y="1.50" width="107.80" height="35.70" rx="3.50" fill="#dae3ea" stroke="#5b8aa9" stroke-width="1"/></svg>
<span style="position:absolute;left:490.46px;top:761px;font-family:'Liberation Sans', sans-serif;font-size:15.6px;line-height:1;color:#14181e;font-weight:400;white-space:pre;letter-spacing:0.619px;-webkit-text-stroke:0.12px #14181e;">Одержувач</span>
<svg style="position:absolute;left:591px;top:749px" width="117" height="39"><rect x="1.90" y="1.00" width="113.20" height="36.70" rx="4" fill="#dee1e6"/></svg>
<span style="position:absolute;left:604.66px;top:761px;font-family:'Liberation Sans', sans-serif;font-size:15.6px;line-height:1;color:#33393f;font-weight:400;white-space:pre;letter-spacing:0.100px;-webkit-text-stroke:0.12px #33393f;">Третя особа</span>
<span style="position:absolute;left:197.76px;top:829px;font-family:'Liberation Sans', sans-serif;font-size:15.6px;line-height:1;color:#1f2329;font-weight:400;white-space:pre;letter-spacing:0.420px;-webkit-text-stroke:0.15px #1f2329;">Форма оплати</span>
<span style="position:absolute;left:309.18px;top:828px;font-family:'Liberation Sans', sans-serif;font-size:10.4px;line-height:1;color:#1fa3c0;font-weight:700;white-space:pre;">?</span>
<svg style="position:absolute;left:363px;top:822px" width="132" height="40"><rect x="1.00" y="1.90" width="129.80" height="36.70" rx="4" fill="#dee1e6"/></svg>
<span style="position:absolute;left:376.36px;top:835px;font-family:'Liberation Sans', sans-serif;font-size:15.6px;line-height:1;color:#33393f;font-weight:400;white-space:pre;letter-spacing:0.486px;-webkit-text-stroke:0.12px #33393f;">Безготівковий</span>
<svg style="position:absolute;left:497px;top:822px" width="78" height="40"><rect x="1.90" y="2.40" width="74.20" height="35.70" rx="3.50" fill="#dae3ea" stroke="#5b8aa9" stroke-width="1"/></svg>
<span style="position:absolute;left:510.16px;top:835px;font-family:'Liberation Sans', sans-serif;font-size:15.6px;line-height:1;color:#14181e;font-weight:400;white-space:pre;letter-spacing:0.329px;-webkit-text-stroke:0.12px #14181e;">Готівка</span>
<span style="position:absolute;left:240.78px;top:901px;font-family:'Liberation Sans', sans-serif;font-size:10.4px;line-height:1;color:#1fa3c0;font-weight:700;white-space:pre;">?</span>
<span style="position:absolute;left:741.76px;top:244px;font-family:'Liberation Sans', sans-serif;font-size:15.6px;line-height:1;color:#1f2329;font-weight:400;white-space:pre;letter-spacing:0.366px;-webkit-text-stroke:0.15px #1f2329;">Партнер</span>
<span style="position:absolute;left:808.38px;top:243px;font-family:'Liberation Sans', sans-serif;font-size:10.4px;line-height:1;color:#1fa3c0;font-weight:700;white-space:pre;">?</span>
<span style="position:absolute;left:932.66px;top:246px;font-family:'Liberation Sans', sans-serif;font-size:15.6px;line-height:1;color:#555b62;font-weight:400;white-space:pre;letter-spacing:0.009px;">ТОВ &quot;БПЛА - Україна&quot;</span>
<div style="position:absolute;left:929.1px;top:267px;width:279.69999999999993px;height:1px;background:#e3e6ea;"></div>
<span style="position:absolute;left:741.76px;top:288px;font-family:'Liberation Sans', sans-serif;font-size:15.6px;line-height:1;color:#1f2329;font-weight:400;white-space:pre;letter-spacing:0.332px;-webkit-text-stroke:0.15px #1f2329;">Тип отримувача</span>
<span style="position:absolute;left:864.78px;top:287px;font-family:'Liberation Sans', sans-serif;font-size:10.4px;line-height:1;color:#1fa3c0;font-weight:700;white-space:pre;">?</span>
<svg style="position:absolute;left:928px;top:282px" width="113" height="39"><rect x="1.10" y="1.00" width="110.50" height="36.70" rx="4" fill="#dee1e6"/></svg>
<span style="position:absolute;left:940.56px;top:294px;font-family:'Liberation Sans', sans-serif;font-size:15.6px;line-height:1;color:#33393f;font-weight:400;white-space:pre;letter-spacing:0.392px;-webkit-text-stroke:0.12px #33393f;">Організація</span>
<svg style="position:absolute;left:1043px;top:282px" width="147" height="39"><rect x="1.70" y="1.50" width="143.60" height="35.70" rx="3.50" fill="#dae3ea" stroke="#5b8aa9" stroke-width="1"/></svg>
<span style="position:absolute;left:1056.16px;top:294px;font-family:'Liberation Sans', sans-serif;font-size:15.6px;line-height:1;color:#14181e;font-weight:400;white-space:pre;letter-spacing:0.344px;-webkit-text-stroke:0.12px #14181e;">Приватна особа</span>
<span style="position:absolute;left:741.76px;top:362px;font-family:'Liberation Sans', sans-serif;font-size:15.6px;line-height:1;color:#1f2329;font-weight:400;white-space:pre;letter-spacing:0.303px;-webkit-text-stroke:0.15px #1f2329;">Контактна особа</span>
<span style="position:absolute;left:741.76px;top:385px;font-family:'Liberation Sans', sans-serif;font-size:15.6px;line-height:1;color:#1f2329;font-weight:400;white-space:pre;letter-spacing:0.498px;-webkit-text-stroke:0.15px #1f2329;">отримувача</span>
<span style="position:absolute;left:835.18px;top:384px;font-family:'Liberation Sans', sans-serif;font-size:10.4px;line-height:1;color:#1fa3c0;font-weight:700;white-space:pre;">?</span>
<span style="position:absolute;left:932.66px;top:364px;font-family:'Liberation Sans', sans-serif;font-size:15.6px;line-height:1;color:#555b62;font-weight:400;white-space:pre;letter-spacing:0.235px;">Онищенко Володимир</span>
<div style="position:absolute;left:929.1px;top:385px;width:279.69999999999993px;height:1px;background:#e3e6ea;"></div>
<span style="position:absolute;left:741.76px;top:424px;font-family:'Liberation Sans', sans-serif;font-size:15.6px;line-height:1;color:#1f2329;font-weight:400;white-space:pre;letter-spacing:0.439px;-webkit-text-stroke:0.15px #1f2329;">Ім&#x27;я отримувача</span>
<span style="position:absolute;left:867.78px;top:423px;font-family:'Liberation Sans', sans-serif;font-size:10.4px;line-height:1;color:#1fa3c0;font-weight:700;white-space:pre;">?</span>
<span style="position:absolute;left:932.66px;top:426px;font-family:'Liberation Sans', sans-serif;font-size:15.6px;line-height:1;color:#555b62;font-weight:400;white-space:pre;letter-spacing:0.235px;">Онищенко Володимир</span>
<div style="position:absolute;left:929.1px;top:447px;width:320.6px;height:1px;background:#c8ced6;"></div>
<span style="position:absolute;left:741.76px;top:467px;font-family:'Liberation Sans', sans-serif;font-size:15.6px;line-height:1;color:#1f2329;font-weight:400;white-space:pre;letter-spacing:-0.133px;-webkit-text-stroke:0.15px #1f2329;">Телефон</span>
<span style="position:absolute;left:741.76px;top:491px;font-family:'Liberation Sans', sans-serif;font-size:15.6px;line-height:1;color:#1f2329;font-weight:400;white-space:pre;letter-spacing:0.498px;-webkit-text-stroke:0.15px #1f2329;">отримувача</span>
<span style="position:absolute;left:835.18px;top:490px;font-family:'Liberation Sans', sans-serif;font-size:10.4px;line-height:1;color:#1fa3c0;font-weight:700;white-space:pre;">?</span>
<span style="position:absolute;left:932.66px;top:470px;font-family:'Liberation Sans', sans-serif;font-size:15.6px;line-height:1;color:#555b62;font-weight:400;white-space:pre;letter-spacing:-0.134px;">380976767751</span>
<div style="position:absolute;left:929.1px;top:491px;width:320.6px;height:1px;background:#5b8aa9;"></div>
<div style="position:absolute;left:1026px;top:466px;width:1px;height:20.5px;background:#15181c;"></div>
<span style="position:absolute;left:741.76px;top:529px;font-family:'Liberation Sans', sans-serif;font-size:15.6px;line-height:1;color:#1f2329;font-weight:400;white-space:pre;letter-spacing:0.322px;-webkit-text-stroke:0.15px #1f2329;">Область отримувача/</span>
<span style="position:absolute;left:741.76px;top:553px;font-family:'Liberation Sans', sans-serif;font-size:15.6px;line-height:1;color:#1f2329;font-weight:400;white-space:pre;letter-spacing:0.556px;-webkit-text-stroke:0.15px #1f2329;">Місто</span>
<span style="position:absolute;left:932.66px;top:532px;font-family:'Liberation Sans', sans-serif;font-size:15.6px;line-height:1;color:#555b62;font-weight:400;white-space:pre;letter-spacing:-0.050px;">Волинська</span>
<div style="position:absolute;left:929.1px;top:552px;width:156.60000000000002px;height:1px;background:#c8ced6;"></div>
<span style="position:absolute;left:1096.26px;top:532px;font-family:'Liberation Sans', sans-serif;font-size:15.6px;line-height:1;color:#555b62;font-weight:400;white-space:pre;letter-spacing:0.022px;">Іваничі (Волинська</span>
<div style="position:absolute;left:1092px;top:552px;width:157.70000000000005px;height:1px;background:#c8ced6;"></div>
<span style="position:absolute;left:741.76px;top:586px;font-family:'Liberation Sans', sans-serif;font-size:15.6px;line-height:1;color:#1f2329;font-weight:400;white-space:pre;letter-spacing:0.211px;-webkit-text-stroke:0.15px #1f2329;">Часто</span>
<span style="position:absolute;left:741.76px;top:609px;font-family:'Liberation Sans', sans-serif;font-size:15.6px;line-height:1;color:#1f2329;font-weight:400;white-space:pre;letter-spacing:0.519px;-webkit-text-stroke:0.15px #1f2329;">використовувані</span>
<span style="position:absolute;left:741.76px;top:633px;font-family:'Liberation Sans', sans-serif;font-size:15.6px;line-height:1;color:#1f2329;font-weight:400;white-space:pre;letter-spacing:0.289px;-webkit-text-stroke:0.15px #1f2329;">міста</span>
<span style="position:absolute;left:783.78px;top:632px;font-family:'Liberation Sans', sans-serif;font-size:10.4px;line-height:1;color:#1fa3c0;font-weight:700;white-space:pre;">?</span>
<svg style="position:absolute;left:927px;top:580px" width="68" height="38"><rect x="1.90" y="1.00" width="64.80" height="35.80" rx="4" fill="#dee1e6"/></svg>
<span style="position:absolute;left:940.46px;top:592px;font-family:'Liberation Sans', sans-serif;font-size:15.6px;line-height:1;color:#33393f;font-weight:400;white-space:pre;letter-spacing:0.736px;-webkit-text-stroke:0.12px #33393f;">Львів</span>
<svg style="position:absolute;left:996px;top:580px" width="106" height="38"><rect x="1.90" y="1.00" width="103.10" height="35.80" rx="4" fill="#dee1e6"/></svg>
<span style="position:absolute;left:1009.86px;top:592px;font-family:'Liberation Sans', sans-serif;font-size:15.6px;line-height:1;color:#33393f;font-weight:400;white-space:pre;letter-spacing:0.430px;-webkit-text-stroke:0.12px #33393f;">Ємільчине</span>
<svg style="position:absolute;left:927px;top:625px" width="210" height="39"><rect x="1.90" y="1.00" width="206.90" height="36.70" rx="4" fill="#dee1e6"/></svg>
<span style="position:absolute;left:940.46px;top:638px;font-family:'Liberation Sans', sans-serif;font-size:15.6px;line-height:1;color:#33393f;font-weight:400;white-space:pre;letter-spacing:0.298px;-webkit-text-stroke:0.12px #33393f;">Іваничі (Волинська обл.)</span>
<svg style="position:absolute;left:927px;top:671px" width="324" height="63"><rect x="1.90" y="1.30" width="321.10" height="60.30" rx="4" fill="#dee1e6"/></svg>
<span style="position:absolute;left:940.46px;top:684px;font-family:'Liberation Sans', sans-serif;font-size:15.6px;line-height:1;color:#33393f;font-weight:400;white-space:pre;letter-spacing:0.437px;-webkit-text-stroke:0.12px #33393f;">Іванківці (Козятинський р-н., Вінницька</span>
<span style="position:absolute;left:1070.06px;top:708px;font-family:'Liberation Sans', sans-serif;font-size:15.6px;line-height:1;color:#33393f;font-weight:400;white-space:pre;letter-spacing:0.408px;-webkit-text-stroke:0.12px #33393f;">обл.)</span>
<svg style="position:absolute;left:927px;top:741px" width="66" height="39"><rect x="1.90" y="1.10" width="62.90" height="36.70" rx="4" fill="#dee1e6"/></svg>
<span style="position:absolute;left:940.46px;top:753px;font-family:'Liberation Sans', sans-serif;font-size:15.6px;line-height:1;color:#33393f;font-weight:400;white-space:pre;letter-spacing:0.723px;-webkit-text-stroke:0.12px #33393f;">None</span>
<span style="position:absolute;left:741.76px;top:821px;font-family:'Liberation Sans', sans-serif;font-size:15.6px;line-height:1;color:#1f2329;font-weight:400;white-space:pre;letter-spacing:0.180px;-webkit-text-stroke:0.15px #1f2329;">Відділення</span>
<span style="position:absolute;left:741.76px;top:844px;font-family:'Liberation Sans', sans-serif;font-size:15.6px;line-height:1;color:#1f2329;font-weight:400;white-space:pre;letter-spacing:0.498px;-webkit-text-stroke:0.15px #1f2329;">отримувача</span>
<span style="position:absolute;left:834.48px;top:843px;font-family:'Liberation Sans', sans-serif;font-size:10.4px;line-height:1;color:#1fa3c0;font-weight:700;white-space:pre;">?</span>
<span style="position:absolute;left:932.86px;top:823px;font-family:'Liberation Sans', sans-serif;font-size:15.6px;line-height:1;color:#555b62;font-weight:400;white-space:pre;letter-spacing:-0.089px;">Відділення №1: вул. 8-го Березня, 10</span>
<div style="position:absolute;left:928.9px;top:844px;width:321.1px;height:1px;background:#c8ced6;"></div>
<div style="position:absolute;left:1287.4px;top:118px;width:20.5px;height:784px;background:#f1f1f1;"></div>
<div style="position:absolute;left:1289px;top:139px;width:17px;height:434px;background:#c1c1c1;"></div>
<svg style="position:absolute;left:1292.5px;top:126.5px;" width="10" height="6" viewBox="0 0 10 6"><path d="M5 .500L9.800 5.500H.200z" fill="#a3a3a3"/></svg>
<div style="position:absolute;left:1308px;top:118px;width:607px;height:784px;background:#f8f9fa;"></div>
<svg style="position:absolute;left:1324px;top:125px" width="231" height="50"><rect x="1.80" y="1.80" width="228.10" height="47.00" rx="5" fill="#5b8aa9"/></svg>
<svg style="position:absolute;left:1337px;top:145px;" width="17" height="14" viewBox="0 0 17 14"><rect x=".300" y=".300" width="16.400" height="13.400" rx="2" fill="#fff"/><path d="M.800 2.200L8.500 8.400 16.200 2.200" fill="none" stroke="#5b8aa9" stroke-width="1.100"/></svg>
<span style="position:absolute;left:1358.10px;top:144px;font-family:'Liberation Sans', sans-serif;font-size:15px;line-height:1;color:#fff;font-weight:700;white-space:pre;letter-spacing:-0.035px;">Надіслати повідомлення</span>
<svg style="position:absolute;left:1561px;top:125px" width="115" height="50"><rect x="1.80" y="1.80" width="112.10" height="47.00" rx="5" fill="#dee1e6"/></svg>
<svg style="position:absolute;left:1575.4px;top:145px;" width="14.5" height="14" viewBox="0 0 14.5 14"><path d="M0 0H14.500V8.500L9 14H0z" fill="#262c36"/><path d="M14.500 9.500H10V14" fill="none" stroke="#dee1e6" stroke-width="1"/></svg>
<span style="position:absolute;left:1593.58px;top:144px;font-family:'Liberation Sans', sans-serif;font-size:15.4px;line-height:1;color:#1f2937;font-weight:400;white-space:pre;letter-spacing:0.668px;-webkit-text-stroke:0.25px #1f2937;">Примітка</span>
<svg style="position:absolute;left:1683px;top:125px" width="61" height="50"><rect x="1.10" y="1.80" width="58.80" height="47.00" rx="5" fill="#dee1e6"/></svg>
<svg style="position:absolute;left:1695.2px;top:131.7px;" width="38" height="38" viewBox="0 0 38 38"><defs><linearGradient id="wg" x1="0" y1="0" x2="0" y2="1"><stop offset="0" stop-color="#62d96f"/><stop offset="1" stop-color="#22b13a"/></linearGradient></defs><g transform="scale(1.0556)"><path d="M2.300 33.800l2.400-8.600A15.500 15.500 0 1 1 10.800 31.200z" fill="#fff"/><path d="M5.200 30.900l1.700-6.200A12.700 12.700 0 1 1 11.600 29.100z" fill="url(#wg)"/><path d="M12.800 10.800c.6-1.300 1.800-.9 2.100-.4l1.300 2.800c.2.500-.9 1.600-1.100 2 1.200 2.500 2.900 3.900 5.200 4.900.5-.4 1.300-1.700 1.800-1.500l2.900 1.400c.5.300.3 1.500-.3 2.300-1.500 1.800-4.600 1-7.700-1.100-3.200-2.200-5.500-6.300-5.200-8.400.1-.8.500-1.500 1-2z" fill="#fff"/></g></svg>
<svg style="position:absolute;left:1750px;top:125px" width="62" height="50"><rect x="1.70" y="1.80" width="58.50" height="47.00" rx="5" fill="#dee1e6"/></svg>
<svg style="position:absolute;left:1764px;top:133.3px;" width="34.5" height="34.5" viewBox="0 0 34.5 34.5"><circle cx="17.250" cy="17.250" r="17" fill="#0a8bd0"/><g transform="translate(2.800 3) scale(.84)"><path d="M7.500 16.800L25.800 9.600c.9-.3 1.600.2 1.300 1.500L24 25.700c-.2 1-.8 1.300-1.700.8l-4.700-3.500-2.300 2.200c-.3.300-.5.500-1 .5l.3-4.800 8.700-7.900c.4-.3-.1-.5-.6-.2L12 19.600l-4.600-1.400c-1-.3-1-1 .1-1.400z" fill="#fff"/></g></svg>
<svg style="position:absolute;left:1817px;top:125px" width="65" height="50"><rect x="1.70" y="1.80" width="62.20" height="47.00" rx="5" fill="#dee1e6"/></svg>
<svg style="position:absolute;left:1830.5px;top:144.2px;" width="14" height="14" viewBox="0 0 14 14"><circle cx="7" cy="7" r="5.900" fill="none" stroke="#262c36" stroke-width="1.700"/><path d="M7.300 3.500V7.500H4.500" fill="none" stroke="#262c36" stroke-width="1.300"/></svg>
<span style="position:absolute;left:1849.08px;top:144px;font-family:'Liberation Sans', sans-serif;font-size:15.4px;line-height:1;color:#1f2937;font-weight:400;white-space:pre;letter-spacing:0.774px;-webkit-text-stroke:0.25px #1f2937;">Дії</span>
<svg style="position:absolute;left:1900.5px;top:142.5px;" width="16" height="16" viewBox="0 0 16 16"><circle cx="8" cy="6.800" r="5.450" fill="none" stroke="#5c6570" stroke-width="1.700"/><path d="M11.900 10.700L16 14.800" stroke="#5c6570" stroke-width="1.900"/></svg>
<div style="position:absolute;left:1308px;top:183.4px;width:607px;height:20.5px;background:#f1f1f1;"></div>
<div style="position:absolute;left:1329px;top:185.3px;width:422.7px;height:16.5px;background:#c1c1c1;"></div>
<svg style="position:absolute;left:1315.5px;top:188.8px;" width="6" height="10" viewBox="0 0 6 10"><path d="M5.700 .300V9.700L.500 5z" fill="#a3a3a3"/></svg>
<svg style="position:absolute;left:1906.5px;top:188.8px;" width="6" height="10" viewBox="0 0 6 10"><path d="M.300 .300V9.700L5.500 5z" fill="#505050"/></svg>
<div style="position:absolute;left:1325.8px;top:248.6px;width:236px;height:1px;background:#dee2e6;"></div>
<div style="position:absolute;left:1666.1px;top:248.6px;width:235.7px;height:1px;background:#dee2e6;"></div>
<span style="position:absolute;left:1579.68px;top:243px;font-family:'Liberation Sans', sans-serif;font-size:15.4px;line-height:1;color:#5c626b;font-weight:700;white-space:pre;letter-spacing:-0.036px;">Сьогодні</span>
<svg style="position:absolute;left:1324px;top:280px" width="43" height="43"><rect x="1.80" y="1.90" width="40.10" height="39.80" rx="4" fill="#2c25bd"/></svg>
<span style="position:absolute;left:1338.55px;top:292px;font-family:'Liberation Sans', sans-serif;font-size:22.5px;line-height:1;color:#fff;font-weight:400;white-space:pre;-webkit-text-stroke:0.25px #fff;">A</span>
<span style="position:absolute;left:1373.48px;top:283px;font-family:'Liberation Sans', sans-serif;font-size:15.4px;line-height:1;color:#3a4048;font-weight:700;white-space:pre;letter-spacing:0.280px;">Unitsoft info</span>
<span style="position:absolute;left:1470.96px;top:284px;font-family:'Liberation Sans', sans-serif;font-size:14px;line-height:1;color:#9aa0a6;font-weight:400;white-space:pre;letter-spacing:0.397px;">- 5 хвилин тому</span>
<span style="position:absolute;left:1373.26px;top:307px;font-family:'Liberation Sans', sans-serif;font-size:15.6px;line-height:1;color:#4d545d;font-weight:400;white-space:pre;letter-spacing:0.083px;">NovaPoshta internet document створено</span>
</body></html>
